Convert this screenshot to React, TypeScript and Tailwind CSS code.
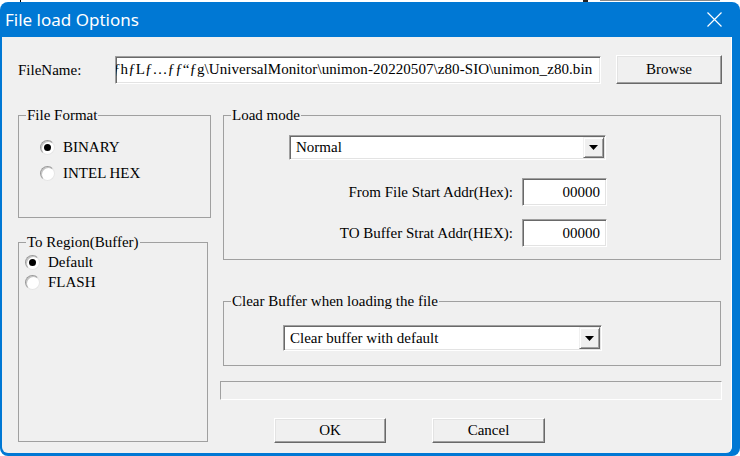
import React from "react";

const serif = { fontFamily: '"Liberation Serif", "Times New Roman", serif' };

function Sunken({ className = "", children }: { className?: string; children?: React.ReactNode }) {
  return (
    <div
      className={`border border-t-[#a0a0a0] border-l-[#a0a0a0] border-b-white border-r-white shadow-[inset_1px_1px_0_#696969,inset_-1px_-1px_0_#e3e3e3] bg-white ${className}`}
    >
      {children}
    </div>
  );
}

function Button({ label, className = "" }: { label: string; className?: string }) {
  return (
    <div
      className={`flex items-center justify-center bg-[#f0f0f0] border border-t-white border-l-white border-b-[#696969] border-r-[#696969] shadow-[inset_-1px_-1px_0_#a0a0a0,inset_1px_1px_0_#e3e3e3] text-[15px] text-black ${className}`}
    >
      {label}
    </div>
  );
}

function Group({ title, className = "", children }: { title: string; className?: string; children?: React.ReactNode }) {
  return (
    <div className={`relative border border-[#a0a0a0] ${className}`}>
      <span className="absolute -top-[10px] left-[7px] px-[1px] bg-[#f0f0f0] text-[15px] leading-[18px] text-black whitespace-nowrap">
        {title}
      </span>
      {children}
    </div>
  );
}

function Radio({ label, checked }: { label: string; checked?: boolean }) {
  return (
    <div className="flex items-center h-[17px]">
      <div className="w-[15px] h-[15px] rounded-full bg-white border border-t-[#9a9a9a] border-l-[#9a9a9a] border-b-[#e6e6e6] border-r-[#e6e6e6] shadow-[inset_1px_1px_0_#c4c4c4] flex items-center justify-center">
        {checked && <div className="w-[7px] h-[7px] rounded-full bg-black" />}
      </div>
      <span className="ml-[8px] text-[15px] text-black leading-[17px]">{label}</span>
    </div>
  );
}

function Combo({ value, className = "" }: { value: string; className?: string }) {
  return (
    <Sunken className={`flex items-stretch p-[1px] ${className}`}>
      <div className="flex-1 flex items-center pl-[5px] text-[15px] text-black whitespace-nowrap overflow-hidden">
        {value}
      </div>
      <div className="w-[21px] flex items-center justify-center bg-[#f0f0f0] border border-t-[#f0f0f0] border-l-[#f0f0f0] border-b-[#696969] border-r-[#696969] shadow-[inset_1px_1px_0_white,inset_-1px_-1px_0_#a0a0a0]">
        <svg width="9" height="5" viewBox="0 0 9 5">
          <path d="M0 0H9L4.5 5Z" fill="#000" />
        </svg>
      </div>
    </Sunken>
  );
}

function AddrRow({ label, value, className = "" }: { label: string; value: string; className?: string }) {
  return (
    <div className={`flex items-center justify-end pr-[113px] ${className}`}>
      <span className="mr-[9px] text-[15px] text-black whitespace-nowrap">{label}</span>
      <Sunken className="w-[85px] h-[28px] flex items-center justify-end pr-[6px] text-[15px] text-black">
        {value}
      </Sunken>
    </div>
  );
}

export default function App() {
  return (
    <div className="w-[740px] h-[456px] bg-white overflow-hidden relative" style={serif}>
      {/* bits of the desktop showing above the window */}
      <div className="absolute top-0 left-[20px] w-[1px] h-[2px] bg-black" />
      <div className="absolute top-0 left-[583px] w-[5px] h-[2px] bg-[#222]" />
      <div className="absolute top-0 left-[600px] w-[120px] h-[1px] bg-[#888]" />

      <div className="mt-[2px] h-[454px] w-[740px] bg-[#0078d4] rounded-t-[8px] rounded-b-[8px] flex flex-col">
        {/* title bar */}
        <div className="h-[35px] flex items-center justify-between pl-[5px] pr-[18px] text-white">
          <span className="text-[17px] leading-none" style={{ fontFamily: '"Noto Sans", "Open Sans", sans-serif' }}>
            File load Options
          </span>
          <svg width="15" height="15" viewBox="0 0 15 15">
            <path d="M0.5 0.5L14.5 14.5M14.5 0.5L0.5 14.5" stroke="#fff" strokeWidth="1.2" fill="none" />
          </svg>
        </div>

        {/* dialog body */}
        <div className="flex-1 bg-[#f0f0f0] ml-[2px] mr-[8px] mb-[3px] rounded-b-[6px] border-r border-white pl-[16px] pt-[18px]">
          {/* file name row */}
          <div className="flex items-center h-[29px]">
            <span className="w-[97px] text-[15px] text-black pt-[2px]">FileName:</span>
            <Sunken className="w-[486px] h-[28px] flex items-center overflow-hidden">
              <span className="-ml-[3px] text-[15px] tracking-[0.07px] text-black whitespace-nowrap">
                ƒhƒLƒ…ƒƒ“ƒg\UniversalMonitor\unimon-20220507\z80-SIO\unimon_z80.bin
              </span>
            </Sunken>
            <Button label="Browse" className="ml-[15px] w-[106px] h-[29px]" />
          </div>

          <div className="flex mt-[31px]">
            {/* left column */}
            <div className="w-[193px] flex flex-col">
              <Group title="File Format" className="h-[103px] pt-[23px] pl-[21px]">
                <div className="flex flex-col gap-[9px]">
                  <Radio label="BINARY" checked />
                  <Radio label="INTEL HEX" />
                </div>
              </Group>
              <Group title="To Region(Buffer)" className="mt-[24px] w-[190px] h-[200px] pt-[11px] pl-[6px]">
                <div className="flex flex-col gap-[3px]">
                  <Radio label="Default" checked />
                  <Radio label="FLASH" />
                </div>
              </Group>
            </div>

            {/* right column */}
            <div className="ml-[9px] w-[502px] flex flex-col">
              <Group title="Load mode" className="ml-[3px] w-[498px] h-[145px]">
                <Combo value="Normal" className="mt-[19px] ml-[65px] w-[317px] h-[25px]" />
                <AddrRow label="From File Start Addr(Hex):" value="00000" className="mt-[18px]" />
                <AddrRow label="TO Buffer Strat Addr(HEX):" value="00000" className="mt-[13px]" />
              </Group>

              <Group title="Clear Buffer when loading the file" className="mt-[41px] ml-[3px] w-[498px] h-[65px]">
                <Combo value="Clear buffer with default" className="mt-[23px] ml-[59px] w-[319px] h-[26px]" />
              </Group>

              {/* progress bar */}
              <div className="mt-[15px] w-[502px] h-[19px] border border-t-[#a0a0a0] border-l-[#a0a0a0] border-b-white border-r-white bg-[#f0f0f0]" />

              <div className="flex mt-[18px]">
                <Button label="OK" className="ml-[54px] w-[112px] h-[25px]" />
                <Button label="Cancel" className="ml-[46px] w-[113px] h-[25px]" />
              </div>
            </div>
          </div>
        </div>
      </div>
    </div>
  );
}
